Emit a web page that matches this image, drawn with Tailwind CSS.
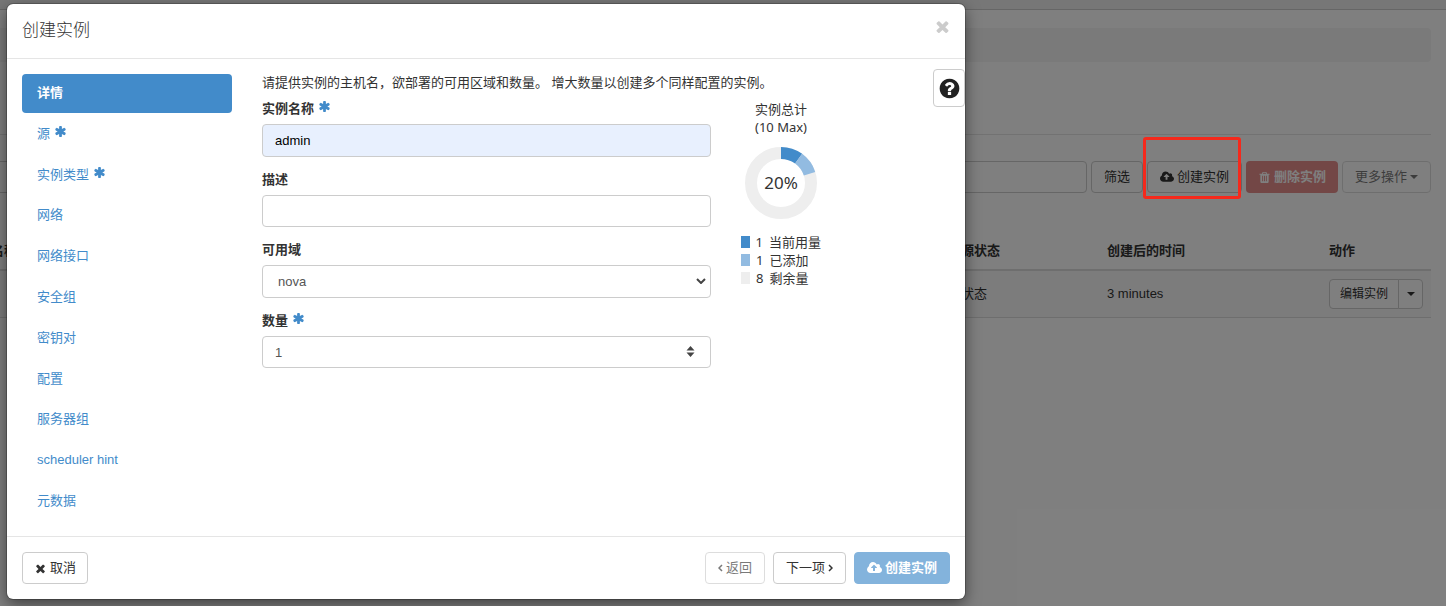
<!DOCTYPE html>
<html lang="zh-CN">
<head>
<meta charset="utf-8">
<title>创建实例</title>
<script src="https://cdn.jsdelivr.net/npm/@tailwindcss/browser@4"></script>
</head>
<body class="relative min-h-screen overflow-hidden bg-white font-['Liberation_Sans','Noto_Sans_CJK_SC',sans-serif] text-[13px] leading-[18px] text-[#333]">

<svg class="hidden" aria-hidden="true">
  <symbol id="upload" viewBox="0 0 1920 1792"><path fill="currentColor" d="M1280 864q0-14-9-23l-352-352q-9-9-23-9t-23 9l-351 351q-10 12-10 24 0 14 9 23t23 9h224v352q0 13 9.500 22.500t22.500 9.500h192q13 0 22.500-9.500t9.500-22.500v-352h224q13 0 22.500-9.500t9.500-22.500zm640 288q0 159-112.500 271.500t-271.500 112.500h-1088q-185 0-316.500-131.500t-131.500-316.500q0-130 70-240t188-165q-2-30-2-43 0-212 150-362t362-150q156 0 285.500 87t188.500 231q71-62 166-62 106 0 181 75t75 181q0 76-41 138 130 31 213.500 135.500t83.500 238.500z"/></symbol>
  <symbol id="trash" viewBox="0 0 1792 1792"><path fill="currentColor" d="M704 1376v-704q0-14-9-23t-23-9h-64q-14 0-23 9t-9 23v704q0 14 9 23t23 9h64q14 0 23-9t9-23zm256 0v-704q0-14-9-23t-23-9h-64q-14 0-23 9t-9 23v704q0 14 9 23t23 9h64q14 0 23-9t9-23zm256 0v-704q0-14-9-23t-23-9h-64q-14 0-23 9t-9 23v704q0 14 9 23t23 9h64q14 0 23-9t9-23zm-544-992h448l-48-117q-7-9-17-11h-317q-10 2-17 11zm928 32v64q0 14-9 23t-23 9h-96v948q0 83-47 143.500t-113 60.500h-832q-66 0-113-58.500t-47-141.500v-952h-96q-14 0-23-9t-9-23v-64q0-14 9-23t23-9h309l70-167q15-37 54-63t79-26h320q40 0 79 26t54 63l70 167h309q14 0 23 9t9 23z"/></symbol>
  <symbol id="times" viewBox="0 0 1792 1792"><path fill="currentColor" d="M1490 1322q0 40-28 68l-136 136q-28 28-68 28t-68-28l-294-294-294 294q-28 28-68 28t-68-28l-136-136q-28-28-28-68t28-68l294-294-294-294q-28-28-28-68t28-68l136-136q28-28 68-28t68 28l294 294 294-294q28-28 68-28t68 28l136 136q28 28 28 68t-28 68l-294 294 294 294q28 28 28 68z"/></symbol>
  <symbol id="question" viewBox="0 0 1792 1792"><path fill="currentColor" d="M1024 1376v-192q0-14-9-23t-23-9h-192q-14 0-23 9t-9 23v192q0 14 9 23t23 9h192q14 0 23-9t9-23zm256-672q0-88-55.500-163t-138.500-116-170-41q-243 0-371 213-15 24 8 42l132 100q7 6 19 6 16 0 25-12 53-68 86-92 34-24 86-24 48 0 85.500 26t37.500 59q0 38-20 61t-68 45q-63 28-115.500 86.500t-52.500 125.500v36q0 14 9 23t23 9h192q14 0 23-9t9-23q0-19 21.500-49.500t54.500-49.500q32-18 49-28.500t46-35 44.500-48 28-60.500 12.500-81zm384 192q0 209-103 385.500t-279.500 279.500-385.500 103-385.500-103-279.500-279.500-103-385.500 103-385.500 279.500-279.500 385.500-103 385.500 103 279.500 279.500 103 385.500z"/></symbol>
  <symbol id="asterisk" viewBox="0 0 1792 1792"><path fill="currentColor" d="M1546 1050q46 26 59.500 77.500t-12.500 97.500l-64 110q-26 46-77.500 59.500t-97.500-12.500l-266-153v307q0 52-38 90t-90 38h-128q-52 0-90-38t-38-90v-307l-266 153q-46 26-97.500 12.500t-77.500-59.500l-64-110q-26-46-12.500-97.500t59.500-77.500l266-154-266-154q-46-26-59.500-77.500t12.500-97.500l64-110q26-46 77.500-59.500t97.500 12.500l266 153v-307q0-52 38-90t90-38h128q52 0 90 38t38 90v307l266-153q46-26 97.500-12.500t77.500 59.500l64 110q26 46 12.500 97.500t-59.500 77.500l-266 154z"/></symbol>
  <symbol id="caret" viewBox="0 0 8 4"><path fill="currentColor" d="M0 0h8L4 4z"/></symbol>
</svg>

<!-- Instances page behind the dialog -->
<div>
  <header class="h-[10px] border-b border-[#ccc] bg-[#eee]"></header>
  <main class="-ml-[43px] pr-[15px] pt-[18px]">
    <div class="h-[34px] rounded bg-[#f4f4f4]"></div>
    <div class="mt-[72px] border-b border-[#e4e4e4]"></div>
    <div class="mt-[26px] flex items-center justify-end gap-1">
      <input type="text" aria-label="搜索" class="h-8 min-w-0 flex-1 rounded border border-[#ccc] bg-white px-3">
      <button class="h-8 rounded border border-[#ccc] bg-white px-3">筛选</button>
      <button class="flex h-8 items-center gap-[3px] rounded border border-[#ccc] bg-white px-3"><svg class="h-[14px] w-[14px]"><use href="#upload"/></svg>创建实例</button>
      <button disabled class="flex h-8 items-center gap-[3px] rounded bg-[#d9534f] px-3 font-bold text-white opacity-65"><svg class="h-[13px] w-[13px]"><use href="#trash"/></svg>删除实例</button>
      <button disabled class="flex h-8 items-center gap-[3px] rounded border border-[#ccc] bg-white px-3 opacity-65">更多操作<svg class="h-1 w-2"><use href="#caret"/></svg></button>
    </div>
    <table class="mt-[40px] w-full table-fixed text-left">
      <thead>
        <tr class="border-b-2 border-[#ddd]">
          <th class="h-[37px] px-2 font-bold">实例名称</th>
          <th class="w-[159px] px-2 font-bold">电源状态</th>
          <th class="w-[222px] px-2 font-bold">创建后的时间</th>
          <th class="w-[110px] px-2 font-bold">动作</th>
        </tr>
      </thead>
      <tbody>
        <tr class="border-b border-[#ddd] bg-[#f9f9f9]">
          <td class="h-[47px] px-2"></td>
          <td class="px-2">无状态</td>
          <td class="px-2">3 minutes</td>
          <td class="px-2">
            <div class="flex">
              <button class="h-[30px] flex-1 whitespace-nowrap rounded-l border border-[#ccc] bg-white text-xs">编辑实例</button>
              <button aria-label="更多" class="-ml-px flex h-[30px] w-[25px] items-center justify-center rounded-r border border-[#ccc] bg-white"><svg class="h-1 w-2"><use href="#caret"/></svg></button>
            </div>
          </td>
        </tr>
      </tbody>
    </table>
  </main>
</div>

<div class="absolute inset-0 bg-black/50"></div>

<!-- Launch instance dialog -->
<div class="absolute inset-x-0 top-0 px-[7px] pt-1">
  <section role="dialog" aria-labelledby="title" class="relative max-w-[958px] rounded-md bg-white shadow-[0_5px_15px_rgba(0,0,0,0.5)] outline outline-black/20">
    <header class="flex h-[55px] items-start justify-between border-b border-[#e5e5e5] px-[15px] pt-[15px]">
      <h1 id="title" class="text-[17px] font-light leading-6">创建实例</h1>
      <button aria-label="关闭" class="text-[#ccc]"><svg class="h-[15px] w-[15px] scale-120"><use href="#times"/></svg></button>
    </header>
    <button aria-label="帮助" class="absolute right-0 top-[65px] flex h-[38px] w-8 items-center justify-center rounded border border-[#ccc] bg-white text-[#222]"><svg class="h-[23px] w-[23px]"><use href="#question"/></svg></button>

    <div class="flex px-[15px] py-[15px]">
      <nav class="flex h-[447px] w-[210px] shrink-0 flex-col justify-between text-[#428bca]">
        <a href="#" class="rounded bg-[#428bca] px-[15px] pb-[11px] pt-[10px] font-bold text-white">详情</a>
        <a href="#" class="flex gap-1 px-[15px] pb-[11px] pt-[10px]">源<svg class="h-[13px] w-[13px]"><use href="#asterisk"/></svg></a>
        <a href="#" class="flex gap-1 px-[15px] pb-[11px] pt-[10px]">实例类型<svg class="h-[13px] w-[13px]"><use href="#asterisk"/></svg></a>
        <a href="#" class="px-[15px] pb-[11px] pt-[10px]">网络</a>
        <a href="#" class="px-[15px] pb-[11px] pt-[10px]">网络接口</a>
        <a href="#" class="px-[15px] pb-[11px] pt-[10px]">安全组</a>
        <a href="#" class="px-[15px] pb-[11px] pt-[10px]">密钥对</a>
        <a href="#" class="px-[15px] pb-[11px] pt-[10px]">配置</a>
        <a href="#" class="px-[15px] pb-[11px] pt-[10px]">服务器组</a>
        <a href="#" class="px-[15px] pb-[11px] pt-[10px]">scheduler hint</a>
        <a href="#" class="px-[15px] pb-[11px] pt-[10px]">元数据</a>
      </nav>

      <div class="ml-[30px] min-w-0 flex-1">
        <p class="mb-2">请提供实例的主机名，欲部署的可用区域和数量。 增大数量以创建多个同样配置的实例。</p>
        <div class="flex gap-[30px]">
          <form class="flex min-w-0 max-w-[449px] flex-1 flex-col gap-[14px]">
            <div class="flex flex-col gap-1">
              <label for="name" class="flex h-5 gap-1 font-bold">实例名称<svg class="h-[13px] w-[13px] text-[#428bca]"><use href="#asterisk"/></svg></label>
              <input id="name" type="text" value="admin" class="h-[33px] rounded border border-[#ccc] bg-[#e8f0fe] px-3 text-black">
            </div>
            <div class="flex flex-col gap-1">
              <label for="desc" class="h-5 font-bold">描述</label>
              <input id="desc" type="text" class="h-8 rounded border border-[#ccc] bg-white px-3">
            </div>
            <div class="flex flex-col gap-1">
              <label for="zone" class="h-5 font-bold">可用域</label>
              <div class="relative">
                <select id="zone" class="block h-[33px] w-full appearance-none rounded border border-[#ccc] bg-white px-[15px] text-[#555]"><option>nova</option></select>
                <svg class="pointer-events-none absolute right-[5px] top-[13px] h-[6px] w-[10px]" viewBox="0 0 10 6" fill="none" stroke="#444" stroke-width="2"><path d="M1 1l4 4 4-4"/></svg>
              </div>
            </div>
            <div class="flex flex-col gap-1">
              <label for="count" class="flex h-5 gap-1 font-bold">数量<svg class="h-[13px] w-[13px] text-[#428bca]"><use href="#asterisk"/></svg></label>
              <div class="relative">
                <input id="count" type="number" value="1" class="block h-8 w-full appearance-[textfield] rounded border border-[#ccc] bg-white px-3 text-[#555]">
                <svg class="pointer-events-none absolute right-4 top-[10px] h-[11px] w-[9px]" viewBox="0 0 9 11"><path fill="#444" d="M0.500 4.500h8l-4-4.500zM0.500 6.500h8l-4 4.500z"/></svg>
              </div>
            </div>
          </form>

          <aside class="w-20 font-['Noto_Sans','Noto_Sans_CJK_SC',sans-serif]">
            <div class="text-center">实例总计<br>(10 Max)</div>
            <svg class="mx-auto mt-[11px] block h-[72px] w-[72px]" viewBox="0 0 72 72" fill="none" stroke-width="12" role="img" aria-label="20%">
              <circle cx="36" cy="36" r="30" stroke="#eee"/>
              <g transform="rotate(-90 36 36)">
                <circle cx="36" cy="36" r="30" stroke="#428bca" pathLength="100" stroke-dasharray="10 90"/>
                <circle cx="36" cy="36" r="30" stroke="#92bbe1" pathLength="100" stroke-dasharray="10 90" stroke-dashoffset="-10"/>
              </g>
              <text x="36" y="42" text-anchor="middle" fill="#333" font-size="17">20%</text>
            </svg>
            <ul class="mt-[14px] whitespace-nowrap">
              <li class="flex items-center gap-[6px]"><span class="h-3 w-[9px] bg-[#428bca]"></span><span>1</span><span>当前用量</span></li>
              <li class="flex items-center gap-[6px]"><span class="h-3 w-[9px] bg-[#92bbe1]"></span><span>1</span><span>已添加</span></li>
              <li class="flex items-center gap-[6px]"><span class="h-3 w-[9px] bg-[#eee]"></span><span>8</span><span>剩余量</span></li>
            </ul>
          </aside>
        </div>
      </div>
    </div>

    <footer class="flex items-center gap-2 border-t border-[#e5e5e5] p-[15px]">
      <button class="mr-auto flex h-8 items-center gap-[3px] rounded border border-[#ccc] bg-white px-[11px]"><svg class="h-[13px] w-[13px]"><use href="#times"/></svg>取消</button>
      <button disabled class="flex h-8 items-center gap-[3px] rounded border border-[#ccc] bg-white px-3 opacity-65"><svg class="h-2 w-[5px]" viewBox="0 0 5 8" fill="none" stroke="currentColor" stroke-width="1.500"><path d="M4 1L1 4l3 3"/></svg>返回</button>
      <button class="flex h-8 items-center gap-[3px] rounded border border-[#ccc] bg-white px-3">下一项<svg class="h-2 w-[5px]" viewBox="0 0 5 8" fill="none" stroke="currentColor" stroke-width="1.500"><path d="M1 1l3 3-3 3"/></svg></button>
      <button disabled class="flex h-8 items-center gap-[3px] rounded border border-[#428bca] bg-[#428bca] px-3 font-bold text-white opacity-65"><svg class="h-[14px] w-[15px]"><use href="#upload"/></svg>创建实例</button>
    </footer>
  </section>
</div>

<!-- Highlight around the create button -->
<div class="absolute right-[205px] top-[137px] h-[62px] w-[98px] rounded-[3px] border-3 border-[#f5291c]"></div>
</body>
</html>
